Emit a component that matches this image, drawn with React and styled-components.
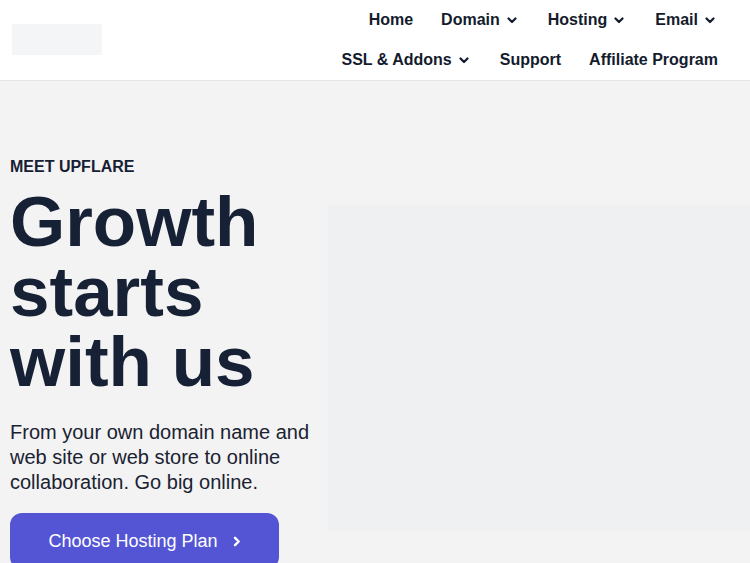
import styled, { createGlobalStyle } from "styled-components";

const GlobalStyle = createGlobalStyle`
  html, body {
    margin: 0;
    padding: 0;
    background: #f3f3f3;
    font-family: "Liberation Sans", Arial, sans-serif;
    overflow: hidden;
  }
  * { box-sizing: border-box; }
`;

// Barra superior
const Header = styled.header`
  height: 81px;
  background: #fff;
  border-bottom: 1px solid #e6e6e6;
  display: flex;
  justify-content: space-between;
  align-items: flex-start;
  padding: 0 17px 0 12px;
`;

const LogoBox = styled.div`
  width: 90px;
  height: 31px;
  margin-top: 24px;
  background: #f4f5f7;
`;

const Nav = styled.nav`
  width: 415px;
  display: flex;
  flex-wrap: wrap;
  justify-content: flex-end;
`;

const NavItem = styled.a`
  display: flex;
  align-items: center;
  gap: 7px;
  height: 40px;
  padding: 0 ${(p) => (p.$menu ? "18px" : "15px")} 0 13px;
  font-size: 16px;
  font-weight: bold;
  color: #141b2d;
  text-decoration: none;
  white-space: nowrap;
`;

// Seção principal
const Hero = styled.section`
  display: flex;
  align-items: flex-start;
  padding: 76px 0 0 10px;
`;

const TextCol = styled.div`
  width: 318px;
  flex-shrink: 0;
`;

const Eyebrow = styled.div`
  font-size: 16px;
  line-height: 20px;
  font-weight: bold;
  color: #172033;
`;

const Heading = styled.h1`
  margin: 10px 0 0;
  font-size: 71px;
  line-height: 70px;
  font-weight: bold;
  color: #172135;
`;

const Lead = styled.p`
  margin: 23px 0 0;
  font-size: 20px;
  line-height: 25px;
  color: #1a2232;
`;

const PrimaryBtn = styled.a`
  margin-top: 18px;
  width: 269px;
  height: 56px;
  display: flex;
  align-items: center;
  justify-content: center;
  gap: 15px;
  background: #5455d5;
  border-radius: 12px;
  color: #fff;
  font-size: 18px;
  text-decoration: none;
`;

const ImageBox = styled.div`
  flex: 1;
  height: 326px;
  margin-top: 48px;
  background: #eff0f2;
`;

const ChevronDown = () => (
  <svg width="10" height="7" viewBox="0 0 10 7" fill="none">
    <path d="M1.5 1.5L5 5l3.5-3.5" stroke="#141b2d" strokeWidth="2.2" strokeLinecap="round" strokeLinejoin="round" />
  </svg>
);

const ChevronRight = () => (
  <svg width="8" height="11" viewBox="0 0 8 11" fill="none">
    <path d="M2 1.8l3.7 3.7L2 9.2" stroke="#fff" strokeWidth="2.4" strokeLinecap="round" strokeLinejoin="round" />
  </svg>
);

const navLinks = [
  { label: "Home" },
  { label: "Domain", menu: true },
  { label: "Hosting", menu: true },
  { label: "Email", menu: true },
  { label: "SSL & Addons", menu: true },
  { label: "Support" },
  { label: "Affiliate Program" },
];

export default function App() {
  return (
    <>
      <GlobalStyle />
      <Header>
        <LogoBox />
        <Nav>
          {navLinks.map((l) => (
            <NavItem key={l.label} href="#" $menu={l.menu}>
              {l.label}
              {l.menu && <ChevronDown />}
            </NavItem>
          ))}
        </Nav>
      </Header>

      <Hero>
        <TextCol>
          <Eyebrow>MEET UPFLARE</Eyebrow>
          <Heading>
            Growth
            <br />
            starts
            <br />
            with us
          </Heading>
          <Lead>
            From your own domain name and web site or web store to online
            collaboration. Go big online.
          </Lead>
          <PrimaryBtn href="#">
            Choose Hosting Plan
            <ChevronRight />
          </PrimaryBtn>
        </TextCol>
        <ImageBox />
      </Hero>
    </>
  );
}
